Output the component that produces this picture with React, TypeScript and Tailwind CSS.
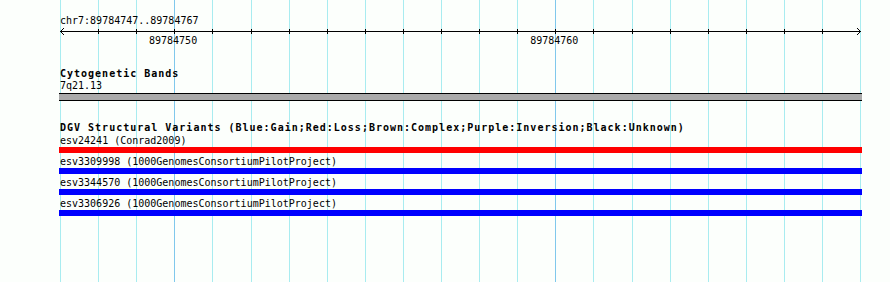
import React from "react";

const guides = Array.from({ length: 22 }, (_, i) => Math.round(60 + 38.1 * i));
const dark = new Set([3, 13]);

const mono = "font-['DejaVu_Sans_Mono','Liberation_Mono',monospace] text-[10px] leading-[10px] text-black";

const variants = [
  { label: "esv24241 (Conrad2009)", color: "bg-[#ff0000]" },
  { label: "esv3309998 (1000GenomesConsortiumPilotProject)", color: "bg-[#0000ff]" },
  { label: "esv3344570 (1000GenomesConsortiumPilotProject)", color: "bg-[#0000ff]" },
  { label: "esv3306926 (1000GenomesConsortiumPilotProject)", color: "bg-[#0000ff]" },
];

export default function App() {
  return (
    <div className="relative w-[890px] h-[282px] overflow-hidden bg-[#fcfffc]">
      <svg className="absolute inset-0" width="890" height="282">
        {guides.map((x, i) => (
          <rect key={i} x={x} y={0} width={1} height={282} fill={dark.has(i) ? "#80c8ec" : "#a8ecf0"} />
        ))}
      </svg>
      <div className={`relative ml-[59px] w-[803px] pt-[16px] ${mono}`}>
        <div className="h-[10px] pl-[1px] whitespace-pre">chr7:89784747..89784767</div>
        <svg width="803" height="10" className="block">
          <line x1={1} y1={5.5} x2={802} y2={5.5} stroke="#000" strokeWidth={1} />
          {guides.slice(1, 21).map((x, i) => (
            <line key={i} x1={x - 59 + 0.5} y1={3} x2={x - 59 + 0.5} y2={8} stroke="#000" strokeWidth={1} />
          ))}
          <polyline points="5,2 1.5,5.5 5,9" fill="none" stroke="#000" strokeWidth={1} />
          <polyline points="798,2 801.5,5.5 798,9" fill="none" stroke="#000" strokeWidth={1} />
        </svg>
        <div className="flex h-[10px] whitespace-pre">
          <span className="ml-[90px]">89784750</span>
          <span className="ml-[333px]">89784760</span>
        </div>
        <div className="mt-[23px] h-[10px] pl-[1px] font-bold tracking-[1px] whitespace-pre">Cytogenetic Bands</div>
        <div className="mt-[2px] h-[10px] pl-[1px] whitespace-pre">7q21.13</div>
        <div className="mt-[2px] h-[8px] border-y border-black bg-[#aaaaaa]" />
        <div className="mt-[22px] h-[10px] pl-[1px] font-bold tracking-[1px] whitespace-pre">
          DGV Structural Variants (Blue:Gain;Red:Loss;Brown:Complex;Purple:Inversion;Black:Unknown)
        </div>
        <div className="mt-[3px] flex flex-col">
          {variants.map((v, i) => (
            <div key={i} className={i > 0 ? "mt-[4px]" : ""}>
              <div className="h-[10px] pl-[1px] whitespace-pre">{v.label}</div>
              <div className={`mt-[1px] h-[6px] ${v.color}`} />
            </div>
          ))}
        </div>
      </div>
    </div>
  );
}
